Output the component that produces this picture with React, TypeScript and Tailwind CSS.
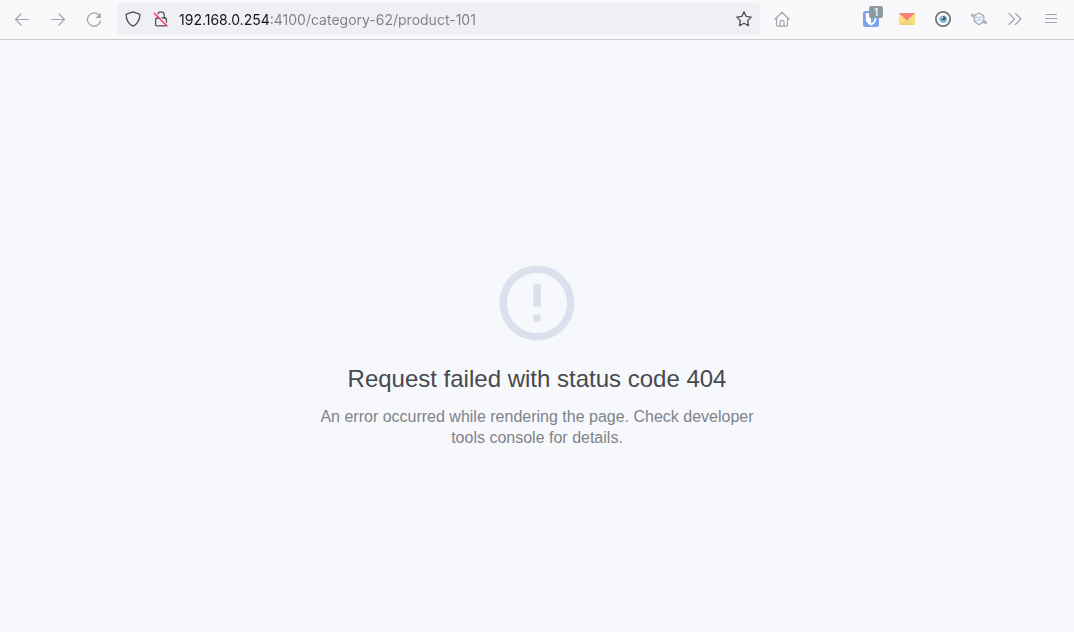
import React, { useState } from 'react';

const HOST = '192.168.0.254';
const PATH = ':4100/category-62/product-101';

const iconProps = {
  width: 16,
  height: 16,
  viewBox: '0 0 16 16',
  fill: 'none',
  stroke: 'currentColor',
  strokeLinecap: 'round',
  strokeLinejoin: 'round',
} as const;

const BackIcon = () => (
  <svg {...iconProps}>
    <path d="M14.5 8.500h-13M7 3 1.500 8.500 7 14" strokeWidth="1.200" />
  </svg>
);

const ForwardIcon = () => (
  <svg {...iconProps}>
    <path d="M1.500 8.500h13M9 3l5.500 5.500L9 14" strokeWidth="1.200" />
  </svg>
);

const ReloadIcon = () => (
  <svg {...iconProps}>
    <path d="M14.500 10A6.600 6.600 0 1 1 12.500 3.700" strokeWidth="1.300" />
    <path d="M14.800 1.700V7H9.500z" fill="currentColor" stroke="none" />
  </svg>
);

const ShieldIcon = () => (
  <svg {...iconProps}>
    <path
      d="M8 .9 14.500 3.200c.3 0 .4.300.4.600C14.800 9 12.500 13 8 15.200 3.500 13 1.200 9 1.100 3.800c0-.3.100-.5.400-.6z"
      strokeWidth="1.300"
    />
  </svg>
);

const InsecureIcon = () => (
  <svg {...iconProps}>
    <path d="M4.700 7V4.200a3.300 3.300 0 0 1 6.600 0V7" strokeWidth="1.300" />
    <rect x="2.600" y="7" width="10.800" height="7.900" rx="1.500" strokeWidth="1.300" />
    <path d="M2.300 1.500 15 14.200" stroke="#f0f0f4" strokeWidth="1.300" />
    <path d="M1.300 2.300 14 15" stroke="#ff3b66" strokeWidth="1.500" />
  </svg>
);

const StarIcon = () => (
  <svg {...iconProps}>
    <path
      d="m8 .9 2.200 4.500 5 .700-3.600 3.500.9 5L8 12.200l-4.500 2.400.9-5L.8 6.100l5-.700z"
      strokeWidth="1.300"
    />
  </svg>
);

const HomeIcon = () => (
  <svg {...iconProps}>
    <path
      d="M.9 8.300 8 1.300l7.100 7M2.500 7v7c0 .700.500 1.200 1.200 1.200h8.600c.700 0 1.200-.5 1.200-1.200V7"
      strokeWidth="1.200"
    />
    <path d="M6 15v-4c0-.8.500-1.400 1.300-1.400h1.400c.8 0 1.300.6 1.300 1.400v4" strokeWidth="1.200" />
  </svg>
);

const PasswordIcon = () => (
  <svg width="16" height="16" viewBox="0 0 16 16">
    <rect width="16" height="16" rx="2.500" fill="#7ea2ec" />
    <path d="M2.800 2h10.400v6.500c0 2.500-2 4.300-5.200 6-3.200-1.700-5.200-3.500-5.200-6z" fill="#fff" />
    <path d="M8 3.600h3.500v4.700c0 1.700-1.200 2.900-3.500 4.200z" fill="#7ea2ec" />
  </svg>
);

const MailIcon = () => (
  <svg width="16" height="12" viewBox="0 0 16 12">
    <path d="M0 0h16v12H0z" fill="#fae07e" />
    <path d="M0 12 8 6l8 6z" fill="#efd477" />
    <path d="M0 0h16L8 7.500z" fill="#fb7e7e" />
  </svg>
);

const EyeIcon = () => (
  <svg width="16" height="16" viewBox="0 0 16 16">
    <circle cx="8" cy="8" r="7.100" fill="#fff" stroke="#737477" strokeWidth="1.800" />
    <path d="M3 8.200C4.500 5.400 6 4.300 8 4.300s3.700 1.300 5 3.900c-1 2.600-3 3.900-5 3.900s-4-1.300-5-3.900z" fill="#c4e2f1" />
    <circle cx="8.300" cy="8.200" r="3.500" fill="#7dbbdc" />
    <circle cx="8.600" cy="7.400" r="2.100" fill="#4b5a63" />
    <circle cx="7.500" cy="6.700" r=".8" fill="#fff" />
  </svg>
);

const MaskIcon = () => (
  <svg {...iconProps}>
    <path d="M8 1.900 12.800 4.700v5.900L8 13.700l-4.800-3.100V4.700z" strokeWidth="1.200" />
    <path d="M3.200 6C1.500 6 .4 5.200.7 3.600l3.200.8M12.800 9.900c1.700-.1 2.700.8 2.400 2.500l-3.300-.9" strokeWidth="1.200" />
    <rect x="3.800" y="6" width="3.900" height="3.600" rx="1.400" fill="#eef3fa" stroke="#b7c9e2" />
    <rect x="8.300" y="6" width="3.900" height="3.600" rx="1.400" fill="#eef3fa" stroke="#b7c9e2" />
  </svg>
);

const OverflowIcon = () => (
  <svg {...iconProps}>
    <path d="M2 2.500 7.500 8 2 13.500M8.500 2.500 14 8l-5.500 5.500" strokeWidth="1.300" />
  </svg>
);

const MenuIcon = () => (
  <svg {...iconProps}>
    <path d="M2.500 3.500h11M2.500 7.500h11M2.500 11.500h11" strokeWidth="1.200" />
  </svg>
);

interface ToolButtonProps {
  label: string;
  children: React.ReactNode;
}

const ToolButton: React.FC<ToolButtonProps> = ({ label, children }) => (
  <button
    type="button"
    aria-label={label}
    title={label}
    className="relative flex h-8 w-9 shrink-0 items-center justify-center rounded text-[#a5a4ab] hover:bg-[#ebebef]"
  >
    {children}
  </button>
);

const AddressBar: React.FC = () => {
  const [url, setUrl] = useState(HOST + PATH);

  return (
    <div className="flex h-8 min-w-0 flex-1 items-center gap-3 rounded bg-[#f0f0f4] px-2 text-[#4f4e57]">
      <button type="button" aria-label="Tracking protection" className="shrink-0">
        <ShieldIcon />
      </button>
      <button type="button" aria-label="Connection is not secure" className="shrink-0">
        <InsecureIcon />
      </button>
      {/* The gradient stop darkens the host and leaves the path grey */}
      <input
        type="text"
        aria-label="Address"
        value={url}
        spellCheck={false}
        onChange={(e) => setUrl(e.target.value)}
        className="-ml-0.5 h-6 min-w-0 flex-1 bg-linear-to-r from-[#15141a] from-[92px] to-[#7f7e84] to-[92px] bg-clip-text font-[Inter,sans-serif] text-sm text-transparent caret-black outline-none"
      />
      <button type="button" aria-label="Bookmark this page" className="shrink-0">
        <StarIcon />
      </button>
    </div>
  );
};

const Toolbar: React.FC = () => (
  <header className="flex h-10 items-center border-b border-[#cccccf] bg-[#f9f9fb] pr-[5px] pb-px pl-1">
    <nav aria-label="History" className="mr-[5px] flex">
      <ToolButton label="Back"><BackIcon /></ToolButton>
      <ToolButton label="Forward"><ForwardIcon /></ToolButton>
      <ToolButton label="Reload"><ReloadIcon /></ToolButton>
    </nav>
    <AddressBar />
    <div className="ml-1 flex">
      <ToolButton label="Home"><HomeIcon /></ToolButton>
    </div>
    <div className="ml-[53px] flex">
      <ToolButton label="Password manager">
        <PasswordIcon />
        <span className="absolute top-[3px] right-1.5 flex h-3 w-3.5 items-center justify-center rounded-xs bg-[#8d9ba1] font-[Inter,sans-serif] text-[10px] leading-3 font-medium text-white">
          1
        </span>
      </ToolButton>
      <ToolButton label="Mail"><MailIcon /></ToolButton>
      <ToolButton label="Page watcher"><EyeIcon /></ToolButton>
      <ToolButton label="Private mask"><MaskIcon /></ToolButton>
      <ToolButton label="More tools"><OverflowIcon /></ToolButton>
      <ToolButton label="Menu"><MenuIcon /></ToolButton>
    </div>
  </header>
);

const ErrorPage: React.FC = () => (
  <main className="flex flex-1 flex-col items-center justify-center bg-[#f7f8fb] px-4 pt-[34px] text-center font-['Liberation_Sans',Arial,sans-serif]">
    <svg width="90" height="90" viewBox="0 0 48 48" fill="#dbe1ec" aria-hidden="true">
      <path d="M22 30h4v4h-4zm0-16h4v12h-4zm1.990-10C12.940 4 4 12.950 4 24s8.940 20 19.990 20S44 35.050 44 24 35.040 4 23.990 4zM24 40c-8.840 0-16-7.160-16-16S15.160 8 24 8s16 7.160 16 16-7.160 16-16 16z" />
    </svg>
    <h1 className="mt-[15px] mb-[11px] text-2xl text-[#47494e]">Request failed with status code 404</h1>
    <p className="max-w-[450px] text-base leading-[21px] text-[#7f828b]">
      An error occurred while rendering the page. Check developer tools console for details.
    </p>
  </main>
);

export default function App() {
  return (
    <div className="flex min-h-screen flex-col">
      <Toolbar />
      <ErrorPage />
    </div>
  );
}
